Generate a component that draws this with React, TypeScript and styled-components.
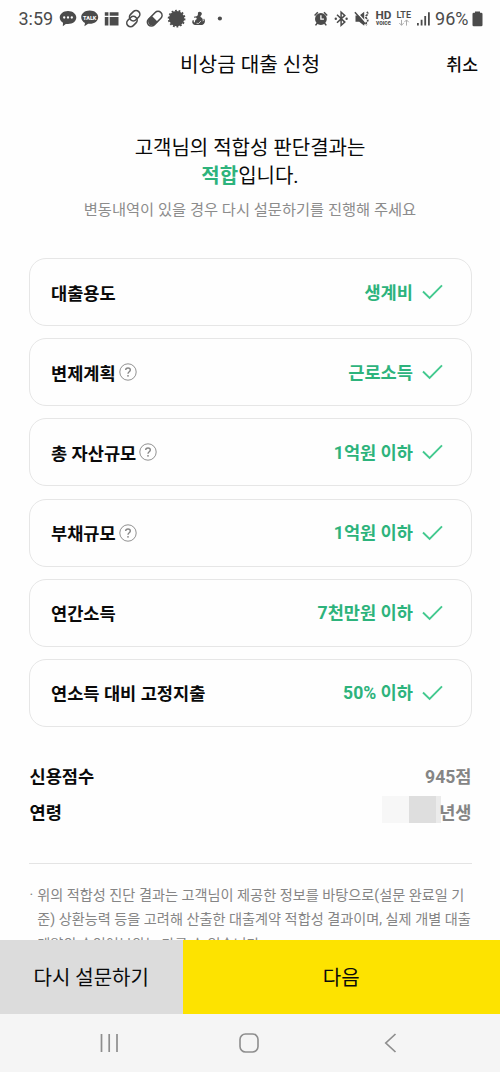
import React from 'react';
import styled, { createGlobalStyle } from 'styled-components';

const GlobalStyle = createGlobalStyle`
  * { box-sizing: border-box; }
  body { margin: 0; background: #fefefe; }
`;

const Screen = styled.div`
  width: 500px;
  height: 1072px;
  display: flex;
  flex-direction: column;
  overflow: hidden;
  background: #fefefe;
  color: #0a0a0a;
  font-family: Roboto, 'Noto Sans CJK KR', sans-serif;
`;

const StatusBar = styled.div`
  flex: none;
  height: 38px;
  padding: 0 17px 0 18.5px;
  display: flex;
  justify-content: space-between;
  align-items: center;
  color: #4b4b4b;
`;

const StatusText = styled.span`
  font-size: 18px;
  line-height: 38px;
`;

const StatusGroup = styled.div<{ $gap: number }>`
  display: flex;
  align-items: center;
  gap: ${(p) => p.$gap}px;
`;

const Icon = styled.svg`
  display: block;
  flex: none;
`;

const AppBar = styled.header`
  flex: none;
  height: 54px;
  padding: 0 22px;
  display: grid;
  grid-template-columns: 1fr auto 1fr;
  align-items: center;
`;

const Title = styled.h1`
  margin: 0;
  grid-column: 2;
  font-size: 20.2px;
  font-weight: 400;
  line-height: 30px;
`;

const Button = styled.button`
  margin: 0;
  padding: 0;
  border: 0;
  background: none;
  color: inherit;
  font-family: inherit;
`;

const Cancel = styled(Button)`
  justify-self: end;
  padding-bottom: 3px;
  font-size: 17.2px;
  font-weight: 500;
`;

const Content = styled.main`
  flex: 1;
  min-height: 0;
  overflow: hidden;
  padding: 42px 28.5px 0;
`;

const Result = styled.p`
  margin: 0;
  text-align: center;
  font-size: 20px;
  line-height: 28px;
`;

const Verdict = styled.strong`
  font-weight: 700;
  color: #2db37c;
`;

const Hint = styled.p`
  margin: 9px 0 0;
  text-align: center;
  font-size: 15.3px;
  line-height: 22px;
  color: #8c8c8c;
`;

const CardList = styled.div`
  margin-top: 37px;
  display: flex;
  flex-direction: column;
  gap: 12.2px;
`;

const Card = styled.div`
  height: 68px;
  padding: 0 28px 0 21.5px;
  display: flex;
  align-items: center;
  border: 1px solid #e6e6e6;
  border-radius: 17px;
  font-size: 17.6px;
  font-weight: 700;
`;

const CardLabel = styled.span``;

const CardValue = styled.span`
  margin-left: auto;
  margin-right: 8.5px;
  padding-bottom: 2px;
  color: #2db37c;
`;

const Facts = styled.dl`
  margin: 31px 0 0;
`;

const Fact = styled.div`
  height: 36px;
  padding-left: 1px;
  display: flex;
  justify-content: space-between;
  align-items: center;
  font-size: 17.6px;
  font-weight: 700;
`;

const FactName = styled.dt``;

const FactValue = styled.dd`
  margin: 0;
  display: flex;
  align-items: center;
  color: #858585;
`;

const Mask = styled.span`
  width: 59px;
  height: 27px;
  margin: -4px -1.5px 0 0;
  background: linear-gradient(90deg, #f7f7f7 27px, #dedede 27px 54px, #ebebeb 54px);
`;

const Divider = styled.hr`
  margin: 33px 0 0;
  border: 0;
  border-top: 1px solid #e4e4e4;
`;

const Note = styled.div`
  margin-top: 19px;
  padding-left: 1px;
  display: flex;
  gap: 4px;
  font-size: 14.17px;
  line-height: 24.5px;
  color: #858585;
  white-space: nowrap;
`;

const Actions = styled.footer`
  flex: none;
  height: 74px;
  display: grid;
  grid-template-columns: 182.5px 1fr;
`;

const Action = styled(Button)<{ $primary?: boolean }>`
  padding-bottom: 2px;
  font-size: 20px;
  background: ${(p) => (p.$primary ? '#fde300' : '#dcdcdc')};
`;

const NavBar = styled.nav`
  flex: none;
  height: 58px;
  background: #f5f5f5;
  display: grid;
  grid-template-columns: 140px 145px auto;
  align-items: center;
  padding-left: 99px;
`;

const rows = [
  { label: '대출용도', value: '생계비' },
  { label: '변제계획', value: '근로소득', help: true },
  { label: '총 자산규모', value: '1억원 이하', help: true },
  { label: '부채규모', value: '1억원 이하', help: true },
  { label: '연간소득', value: '7천만원 이하' },
  { label: '연소득 대비 고정지출', value: '50% 이하' },
];

const HelpMark = styled(Icon)`
  margin-left: 3px;
`;

const HelpIcon = () => (
  <HelpMark width="18" height="18" viewBox="0 0 18 18" fill="none" stroke="#858585">
    <circle cx="9" cy="9" r="8.2" strokeWidth="0.9" />
    <path d="M6.7 7.1C6.7 4.300 11.300 4.300 11.300 7.100C11.300 8.800 9 8.700 9 10.700" strokeWidth="1.400" />
    <circle cx="9" cy="12.800" r="0.900" fill="#858585" stroke="none" />
  </HelpMark>
);

const CheckIcon = () => (
  <Icon width="21" height="16" viewBox="0 0 21 16" fill="none" stroke="#43c98f" strokeWidth="1.9">
    <path d="M1 7.5L7.6 14L20 1.4" />
  </Icon>
);

const LeftIcons = () => (
  <Icon width="170" height="26" viewBox="55 6 170 26" fill="#4b4b4b">
    <path d="M68 11c4.800 0 8.300 2.900 8.300 6.600s-3.500 6.500-8.300 6.500c-.7 0-1.500-.1-2.200-.2l-3 2.300.2-3.400c-2-1.200-3.300-3-3.300-5.200 0-3.700 3.500-6.600 8.300-6.600z" />
    <g fill="#fff">
      <circle cx="64.200" cy="17.500" r="1.150" />
      <circle cx="68" cy="17.500" r="1.150" />
      <circle cx="71.800" cy="17.500" r="1.150" />
    </g>
    <path d="M89.700 10.600c4.900 0 8.500 2.900 8.500 6.600s-3.600 6.600-8.500 6.600c-.6 0-1.100 0-1.600-.1l-3.700 2.600.6-3.400c-2.300-1.200-3.800-3.300-3.800-5.700 0-3.700 3.600-6.600 8.500-6.600z" />
    <text x="83" y="19.500" fill="#fff" fontSize="6" fontWeight="800" textLength="13.400" lengthAdjust="spacingAndGlyphs">TALK</text>
    <path d="M104.800 12.300h3.600v3.500h-3.600zM109.700 12.300h8.800v3.500h-8.800zM104.800 17h3.600v8.400h-3.600zM109.700 17h8.800v8.400h-8.800z" />
    <g fill="none" stroke="#4b4b4b" strokeWidth="1.600">
      <rect x="130.900" y="10" width="7.600" height="11.500" rx="3.800" transform="rotate(45 134.700 15.700)" />
      <rect x="128.200" y="15.800" width="7.600" height="11.500" rx="3.800" transform="rotate(45 132 21.500)" />
      <rect x="150.700" y="10" width="8" height="17.400" rx="4" transform="rotate(45 154.700 18.700)" />
    </g>
    <path d="M151.700 15.700l6 6-2.800 2.900c-4 3.500-8.800-1.700-6-6z" />
    <circle cx="176.600" cy="18.600" r="7.700" />
    <circle cx="176.600" cy="18.600" r="8" fill="none" stroke="#4b4b4b" strokeWidth="1.700" strokeDasharray="1.795 1.795" />
    <path d="M198 12.500c1.300-1.500 4.200-.6 3.800 1.600-.2 1.400-1.600 1.800-1.300 3 2 .8 2.700 2.400 2.200 4.300 1.100-.2 1.300-1.500.5-2.300l1-.4c1.600 2.300.5 5.300-2 6.200h-7.500c-2.300-.4-3.200-2.900-1.800-4.800l1 .5c-.5 1 0 1.900 1 1.900-.2-1.900.7-2.800 2-3.400l-.8-1.600-1.900.2-.3-1 2.700-.5 1.200-1z" />
    <path d="M196.500 23.300q2 1.500 4.500-2.400" fill="none" stroke="#fefefe" strokeWidth=".7" />
    <circle cx="219.900" cy="18.500" r="2.100" />
  </Icon>
);

const RightIcons = () => (
  <Icon width="123" height="26" viewBox="308 6 123 26" fill="#4b4b4b">
    <circle cx="319.900" cy="19" r="5.900" />
    <g fill="none" stroke="#4b4b4b" strokeWidth="1.500">
      <path d="M313.600 15.500l3.200-3.200M323 12.300l3.200 3.200M316.200 23.200l-1.700 2.200M323.600 23.200l1.700 2.200" />
      <path d="M319.900 15.200v4h3" stroke="#fff" strokeWidth="1.300" />
      <path d="M336 14.800l7.800 7.300-3.700 3.200V12.200l3.700 3.200-7.800 7.300" />
    </g>
    <circle cx="334.800" cy="18.700" r="1.200" />
    <circle cx="345.600" cy="18.700" r="1.200" />
    <path d="M354.500 15.400h4l4.700-3.700v14l-5-4h-3.700z" />
    <path d="M355 11.500l9 10" stroke="#fefefe" strokeWidth="1.300" />
    <path d="M353.900 12.200l10.300 11.800" stroke="#4b4b4b" strokeWidth="1.500" />
    <path d="M365.800 11.800q2 1.700 0 3.400q-2 1.700 0 3.400q2 1.700 0 3.400q-1.500 1.700 0 3.200" fill="none" stroke="#4b4b4b" strokeWidth="1.700" strokeDasharray="2.200 .8" />
    <text x="374.400" y="19.300" fontSize="10.500" fontWeight="700" textLength="16" lengthAdjust="spacingAndGlyphs">HD</text>
    <text x="375" y="25.200" fontSize="6.300" fontWeight="700" textLength="15" lengthAdjust="spacingAndGlyphs">voice</text>
    <text x="395.500" y="17.600" fontSize="8.300" fontWeight="600" textLength="14.500" lengthAdjust="spacingAndGlyphs">LTE</text>
    <path d="M400.500 19.800v5.500M398.300 23l2.200 2.300 2.200-2.300M405.500 25.600V20M403.300 22.200l2.200-2.300 2.200 2.300" fill="none" stroke="#ababab" />
    <path d="M416 23h1.800v2.500H416zM419.700 19.700h1.800v5.800h-1.800zM423.300 16h1.800v9.500h-1.800zM427 12.300h1.800v13.200H427z" />
  </Icon>
);

const BatteryIcon = () => (
  <Icon width="11" height="16" viewBox="0 0 11 16" fill="#4b4b4b">
    <path d="M3 1.700V.5h5v1.200h1.200q1.300 0 1.300 1.300v11q0 1.300-1.300 1.300H1.800Q.5 15.300.5 14V3q0-1.300 1.300-1.300z" />
  </Icon>
);

export default function App() {
  return (
    <Screen>
      <GlobalStyle />
      <StatusBar>
        <StatusGroup $gap={2}>
          <StatusText>3:59</StatusText>
          <LeftIcons />
        </StatusGroup>
        <StatusGroup $gap={3.5}>
          <RightIcons />
          <StatusText>96%</StatusText>
          <BatteryIcon />
        </StatusGroup>
      </StatusBar>
      <AppBar>
        <Title>비상금 대출 신청</Title>
        <Cancel>취소</Cancel>
      </AppBar>
      <Content>
        <Result>
          고객님의 적합성 판단결과는
          <br />
          <Verdict>적합</Verdict>입니다.
        </Result>
        <Hint>변동내역이 있을 경우 다시 설문하기를 진행해 주세요</Hint>
        <CardList>
          {rows.map((row) => (
            <Card key={row.label}>
              <CardLabel>{row.label}</CardLabel>
              {row.help && <HelpIcon />}
              <CardValue>{row.value}</CardValue>
              <CheckIcon />
            </Card>
          ))}
        </CardList>
        <Facts>
          <Fact>
            <FactName>신용점수</FactName>
            <FactValue>945점</FactValue>
          </Fact>
          <Fact>
            <FactName>연령</FactName>
            <FactValue>
              <Mask />
              년생
            </FactValue>
          </Fact>
        </Facts>
        <Divider />
        <Note>
          <span>·</span>
          <span>
            위의 적합성 진단 결과는 고객님이 제공한 정보를 바탕으로(설문 완료일 기
            <br />
            준) 상환능력 등을 고려해 산출한 대출계약 적합성 결과이며, 실제 개별 대출
            <br />
            계약의 승인여부와는 다를 수 있습니다.
          </span>
        </Note>
      </Content>
      <Actions>
        <Action>다시 설문하기</Action>
        <Action $primary>다음</Action>
      </Actions>
      <NavBar>
        <Icon width="20" height="20" viewBox="0 0 20 20" stroke="#8e8e8e" strokeWidth="1.7">
          <path d="M2.500 1v18M10.200 1v18M18 1v18" />
        </Icon>
        <Icon width="20" height="20" viewBox="0 0 20 20" fill="none" stroke="#8e8e8e" strokeWidth="1.600">
          <rect x="1" y="1" width="18" height="18" rx="5.500" />
        </Icon>
        <Icon width="13" height="20" viewBox="0 0 13 20" fill="none" stroke="#8e8e8e" strokeWidth="1.700">
          <path d="M11.500 1L1.800 10l9.700 9" />
        </Icon>
      </NavBar>
    </Screen>
  );
}
